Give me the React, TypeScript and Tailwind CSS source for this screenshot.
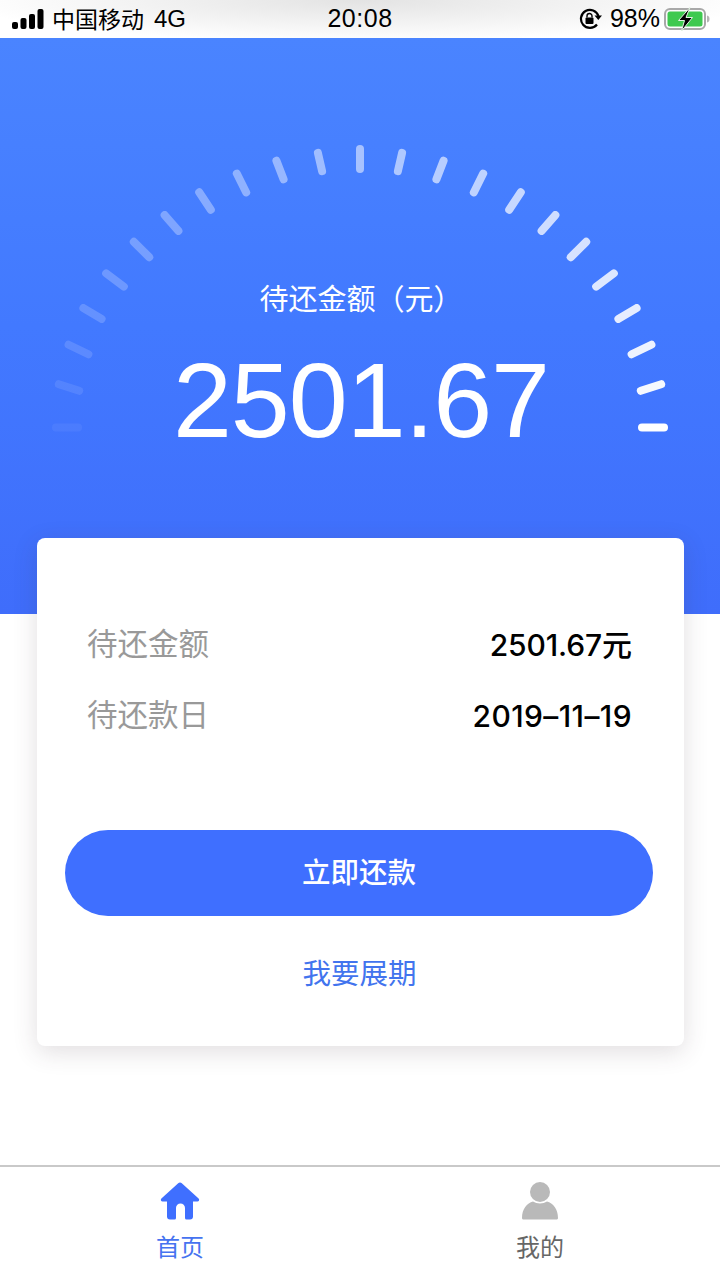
const cjk = "font-['Inter','Noto_Sans_CJK_SC',sans-serif]";

// measured ends of the left half of the gauge, the right half is its mirror
const halfTicks = [
    [52, 427.5, 82, 427.5],
    [55, 383, 83, 392],
    [65, 343, 92, 356],
    [80, 306, 105, 321],
    [103, 271, 127, 289],
    [131, 239, 152, 260],
    [162, 212, 181, 234],
    [197, 189, 213, 213],
    [235, 170, 248, 196],
    [275, 157, 285, 183],
    [317, 149, 323, 175],
    [360, 145, 360, 173],
];

const ticks = Array.from({ length: 23 }, (_, i) => {
    const [ox, oy, ix, iy] = halfTicks[i <= 11 ? i : 22 - i];
    const len = Math.hypot(ix - ox, iy - oy);
    // pull in by the round cap
    const ux = ((ix - ox) / len) * 4;
    const uy = ((iy - oy) / len) * 4;
    const mirror = (x: number) => (i <= 11 ? x : 720 - x);
    return {
        x1: mirror(ox + ux),
        y1: oy + uy - 38,
        x2: mirror(ix - ux),
        y2: iy - uy - 38,
        opacity: 0.05 + (0.95 * i) / 22,
    };
});

function StatusBar() {
    return (
        <div className="h-[38px] flex items-center justify-between pb-[1px] pl-[12px] pr-[10px] text-black bg-[radial-gradient(ellipse_55%_110%_at_50%_0%,#e3e3e3_0%,#ffffff_100%)]">
            <div className="flex items-center w-[258px]">
                <svg width="32" height="20" viewBox="0 0 32 20" fill="#000">
                    <rect x="0" y="13" width="6" height="7" rx="2" />
                    <rect x="8.500" y="9" width="6" height="11" rx="2" />
                    <rect x="17" y="5" width="6" height="15" rx="2" />
                    <rect x="25.500" y="0" width="6" height="20" rx="2" />
                </svg>
                <span className="ml-[8px] text-[23px] font-['Noto_Sans_CJK_SC',sans-serif] leading-none">中国移动</span>
                <span className="ml-[10px] text-[24px] font-['Liberation_Sans',sans-serif] leading-none">4G</span>
            </div>
            <span className="text-[25px] tracking-[0.5px] font-['Liberation_Sans',sans-serif] leading-none">20:08</span>
            <div className="flex items-center justify-end w-[260px]">
                <svg width="23" height="22" viewBox="0 0 23 22" fill="none">
                    <path d="M18 16.500A9 9 0 1 1 19.500 8" stroke="#000" strokeWidth="2.200" />
                    <path d="M15.500 7.500h7.500l-3.700 4.500z" fill="#000" />
                    <rect x="6.500" y="9.500" width="8" height="6.500" rx="1" fill="#000" />
                    <path d="M8 9.500V8a2.500 2.500 0 0 1 5 0v1.500" stroke="#000" strokeWidth="1.400" />
                </svg>
                <span className="ml-[8px] text-[25px] font-['Liberation_Sans',sans-serif] leading-none">98%</span>
                <svg className="ml-[4px]" width="46" height="24" viewBox="0 0 46 24" fill="none">
                    <rect x="1" y="2" width="40" height="20" rx="5" stroke="#a8a8a8" strokeWidth="2" />
                    <rect x="3.500" y="4.500" width="35" height="15" rx="2.500" fill="#3ec94f" />
                    <path d="M43 8.500c2 .5 2.500 1.800 2.500 3.500s-.5 3-2.500 3.500z" fill="#b5b5b5" />
                    <path d="M26 0.500 14.500 13.500h6L17.500 24l11-13.500h-6.500z" fill="#000" stroke="#e4f5e4" strokeWidth="1" />
                </svg>
            </div>
        </div>
    );
}

function Hero() {
    return (
        <div className="relative h-[576px] pt-[239px] text-center text-white bg-[linear-gradient(180deg,#4a84ff_0%,#4279ff_50%,#3f6dfb_100%)]">
            <svg className="absolute left-0 top-0" width="720" height="576" viewBox="0 0 720 576">
                {ticks.map((t, i) => (
                    <line key={i} x1={t.x1} y1={t.y1} x2={t.x2} y2={t.y2} stroke="#fff" strokeWidth="8" strokeLinecap="round" opacity={t.opacity} />
                ))}
            </svg>
            <div className="relative h-[40px] leading-[40px] text-[29px] font-['Noto_Sans_CJK_SC',sans-serif] font-normal pl-[2px]">待还金额（元）</div>
            <div className="relative mt-[28px] h-[110px] leading-[110px] text-[106px] tracking-[-1px] font-['Liberation_Sans',sans-serif] pl-[2px]">2501.67</div>
        </div>
    );
}

function Card() {
    return (
        <div className="relative -mt-[76px] ml-[37px] mr-[36px] h-[508px] rounded-[8px] bg-white pt-[87px] shadow-[0_6px_24px_rgba(70,50,60,0.16)]">
            <div className="flex flex-col gap-[31px] pl-[50px] pr-[52px]">
                <div className="flex h-[40px] items-center justify-between">
                    <span className="-translate-y-[2px] text-[30.5px] font-normal text-[#999] font-['Noto_Sans_CJK_SC',sans-serif]">待还金额</span>
                    <span className={`text-[30px] tracking-[-0.1px] font-medium text-black ${cjk}`}>2501.67元</span>
                </div>
                <div className="flex h-[40px] items-center justify-between">
                    <span className="-translate-y-[2px] text-[30.5px] font-normal text-[#999] font-['Noto_Sans_CJK_SC',sans-serif]">待还款日</span>
                    <span className={`text-[30px] tracking-[0.4px] font-medium text-black ${cjk}`}>2019–11–19</span>
                </div>
            </div>
            <button className="mt-[94px] ml-[28px] block h-[86px] w-[588px] rounded-[43px] bg-[#3f6fff] pb-[4px] text-[28.5px] font-medium text-white font-['Noto_Sans_CJK_SC',sans-serif]">
                立即还款
            </button>
            <div className="mt-[36px] h-[40px] pr-[2px] text-center text-[28.5px] leading-[40px] text-[#4274ee] font-['Noto_Sans_CJK_SC',sans-serif] font-normal">我要展期</div>
        </div>
    );
}

function TabBar() {
    return (
        <div className="flex h-[115px] border-t-2 border-[#c9c9c9] bg-white font-['Noto_Sans_CJK_SC',sans-serif]">
            <div className="flex w-1/2 flex-col items-center pt-[14px]">
                <svg width="40" height="40" viewBox="0 0 40 40">
                    <path d="M20 1.500c.7 0 1.300.3 1.800.8L38.600 17.500c1.200 1.200.4 3-1.200 3H33v15a3 3 0 0 1-3 3h-3.500a1.500 1.500 0 0 1-1.500-1.500V27a4.500 4.500 0 0 0-9 0v10a1.500 1.500 0 0 1-1.500 1.500H10a3 3 0 0 1-3-3v-15H2.600c-1.600 0-2.400-1.800-1.200-3L18.200 2.300c.5-.5 1.100-.8 1.800-.8z" fill="#3f6fff" />
                </svg>
                <span className="mt-[7px] text-[24px] leading-[36px] text-[#4673f0]">首页</span>
            </div>
            <div className="flex w-1/2 flex-col items-center pt-[14px]">
                <svg width="40" height="40" viewBox="0 0 40 40">
                    <circle cx="20" cy="11" r="10" fill="#b9b9b9" />
                    <path d="M2 37c0-9 5-15 11-16.500 4 2.500 10 2.500 14 0C33 22 38 28 38 37c0 1-.8 1.500-2 1.500H4c-1.200 0-2-.5-2-1.500z" fill="#b9b9b9" />
                </svg>
                <span className="mt-[7px] text-[24px] leading-[36px] text-[#666]">我的</span>
            </div>
        </div>
    );
}

export default function App() {
    return (
        <div className="flex h-[1280px] w-[720px] flex-col overflow-hidden bg-white">
            <StatusBar />
            <Hero />
            <div className="flex-1">
                <Card />
            </div>
            <TabBar />
        </div>
    );
}
